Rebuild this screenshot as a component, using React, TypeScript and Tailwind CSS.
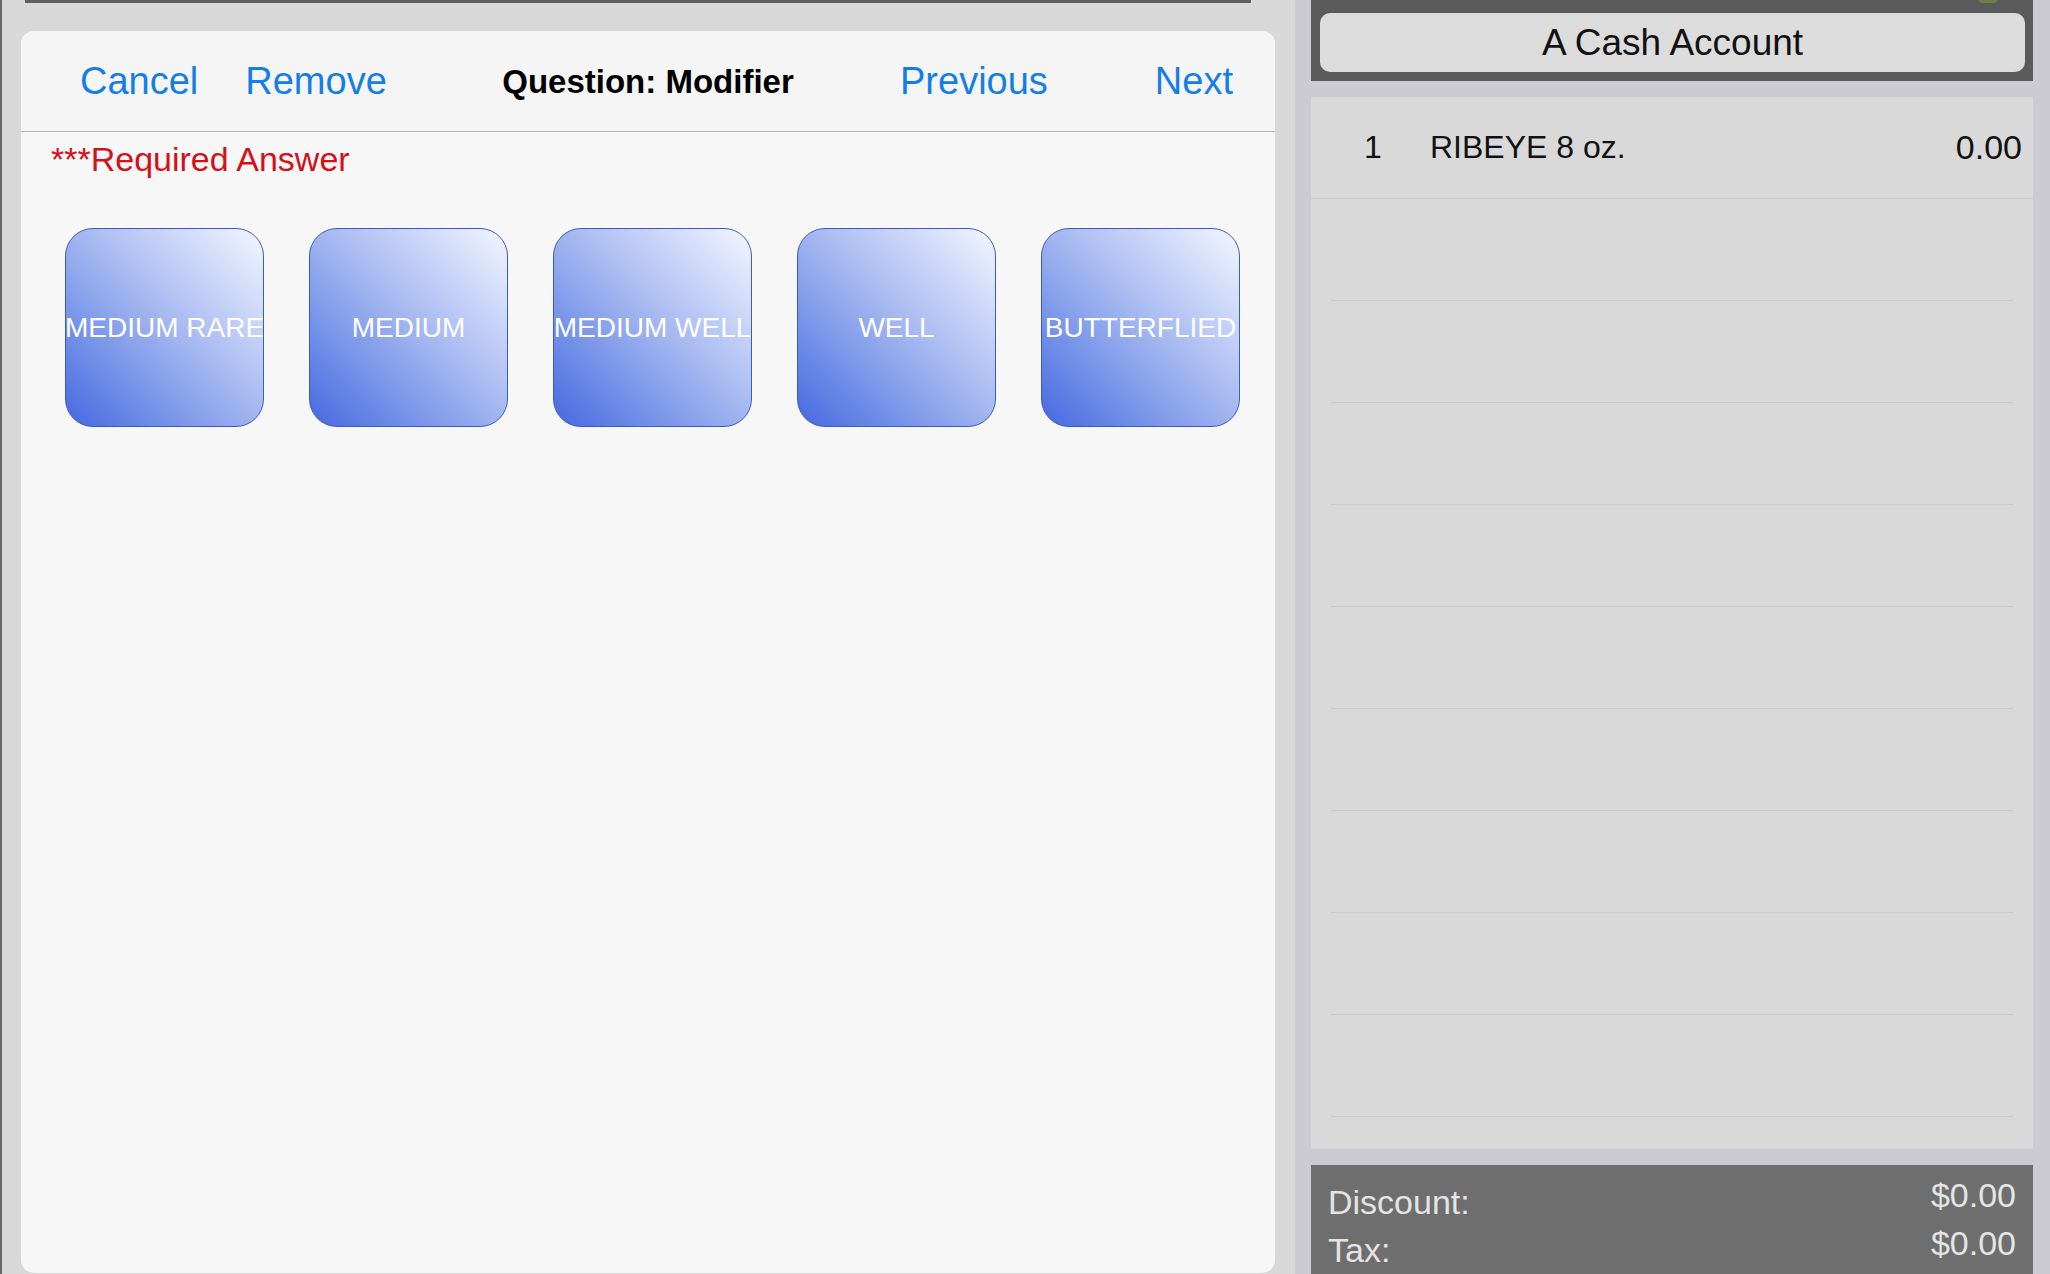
import React from "react";

const modifiers = ["MEDIUM RARE", "MEDIUM", "MEDIUM WELL", "WELL", "BUTTERFLIED"];

// empty rows under the one ordered item
const emptyRows = Array.from({ length: 9 }, (_, i) => i);

function ModifierButton({ label }: { label: string }) {
  return (
    <button className="flex h-[199px] w-[199px] shrink-0 items-center justify-center overflow-hidden whitespace-nowrap rounded-[28px] border-[1.5px] border-[#3a5bc4] bg-linear-to-tr from-[#4668df] via-[#a1b4ef] to-[#f5f7ff] text-[28px] leading-none text-white">
      {label}
    </button>
  );
}

function QuestionCard() {
  return (
    <div className="ml-[19px] mt-[28px] flex h-[1242px] w-[1254px] flex-col overflow-hidden rounded-[13px] bg-[#f7f7f7]">
      {/* nav bar */}
      <div className="grid h-[101px] shrink-0 grid-cols-[1fr_auto_1fr] items-center border-b border-[#b4b4b4] bg-[#f5f5f5] text-[38px] leading-none">
        <div className="flex gap-[47px] pl-[59px] text-[#157ee6]">
          <span>Cancel</span>
          <span>Remove</span>
        </div>
        <div className="text-[33px] font-bold text-black">Question: Modifier</div>
        <div className="flex justify-end gap-[107px] pr-[42px] text-[#157ee6]">
          <span>Previous</span>
          <span>Next</span>
        </div>
      </div>

      <div className="flex h-[54px] items-center pl-[30px] text-[34px] leading-none text-[#d3111b]">
        ***Required Answer
      </div>

      <div className="mt-[42px] flex gap-[45px] pl-[44px]">
        {modifiers.map((m) => (
          <ModifierButton key={m} label={m} />
        ))}
      </div>
    </div>
  );
}

function TicketPanel() {
  return (
    <div className="flex w-[755px] shrink-0 flex-col bg-[#cbcbd1] pl-[16px] pr-[17px]">
      {/* account header */}
      <div className="relative h-[81px] shrink-0 bg-[#5b5b5b] pl-[9px] pr-[8px] pt-[13px]">
        <span className="absolute -top-[4px] right-[36px] h-[7px] w-[18px] rounded-full bg-[#6f7d4c]" />
        <div className="flex h-[59px] items-center justify-center rounded-[10px] bg-[#dcdcdc] text-[37px] leading-none text-[#111]">
          A Cash Account
        </div>
      </div>

      {/* order lines */}
      <div className="mt-[16px] flex h-[1052px] shrink-0 flex-col bg-[#d9d9d9]">
        <div className="flex h-[102px] shrink-0 items-center border-b border-[#c8c8ce] pb-[2px] text-[32px] leading-none text-[#111]">
          <span className="w-[119px] pl-[53px]">1</span>
          <span className="flex-1">RIBEYE 8 oz.</span>
          <span className="pr-[11px] text-[34px]">0.00</span>
        </div>
        {emptyRows.map((r) => (
          <div key={r} className="mx-[20px] h-[102px] shrink-0 border-b border-[#c8c8ce]" />
        ))}
      </div>

      {/* totals */}
      <div className="mt-[16px] flex-1 bg-[#6e6e6e] px-[17px] pt-[13px] text-[34px] leading-none text-[#e4e4e4]">
        <div className="flex h-[48px] items-start justify-between">
          <span className="pt-[7px]">Discount:</span>
          <span>$0.00</span>
        </div>
        <div className="flex h-[48px] items-start justify-between">
          <span className="pt-[7px]">Tax:</span>
          <span>$0.00</span>
        </div>
      </div>
    </div>
  );
}

export default function App() {
  return (
    <div className="flex h-[1274px] w-[2050px] overflow-hidden font-['Liberation_Sans',Arial,sans-serif]">
      <div className="flex w-[1295px] shrink-0 flex-col border-l-2 border-[#666] bg-[#d8d8d8]">
        <div className="ml-[23px] h-[3px] w-[1226px] shrink-0 bg-[#5f5f5f]" />
        <QuestionCard />
      </div>
      <TicketPanel />
    </div>
  );
}
